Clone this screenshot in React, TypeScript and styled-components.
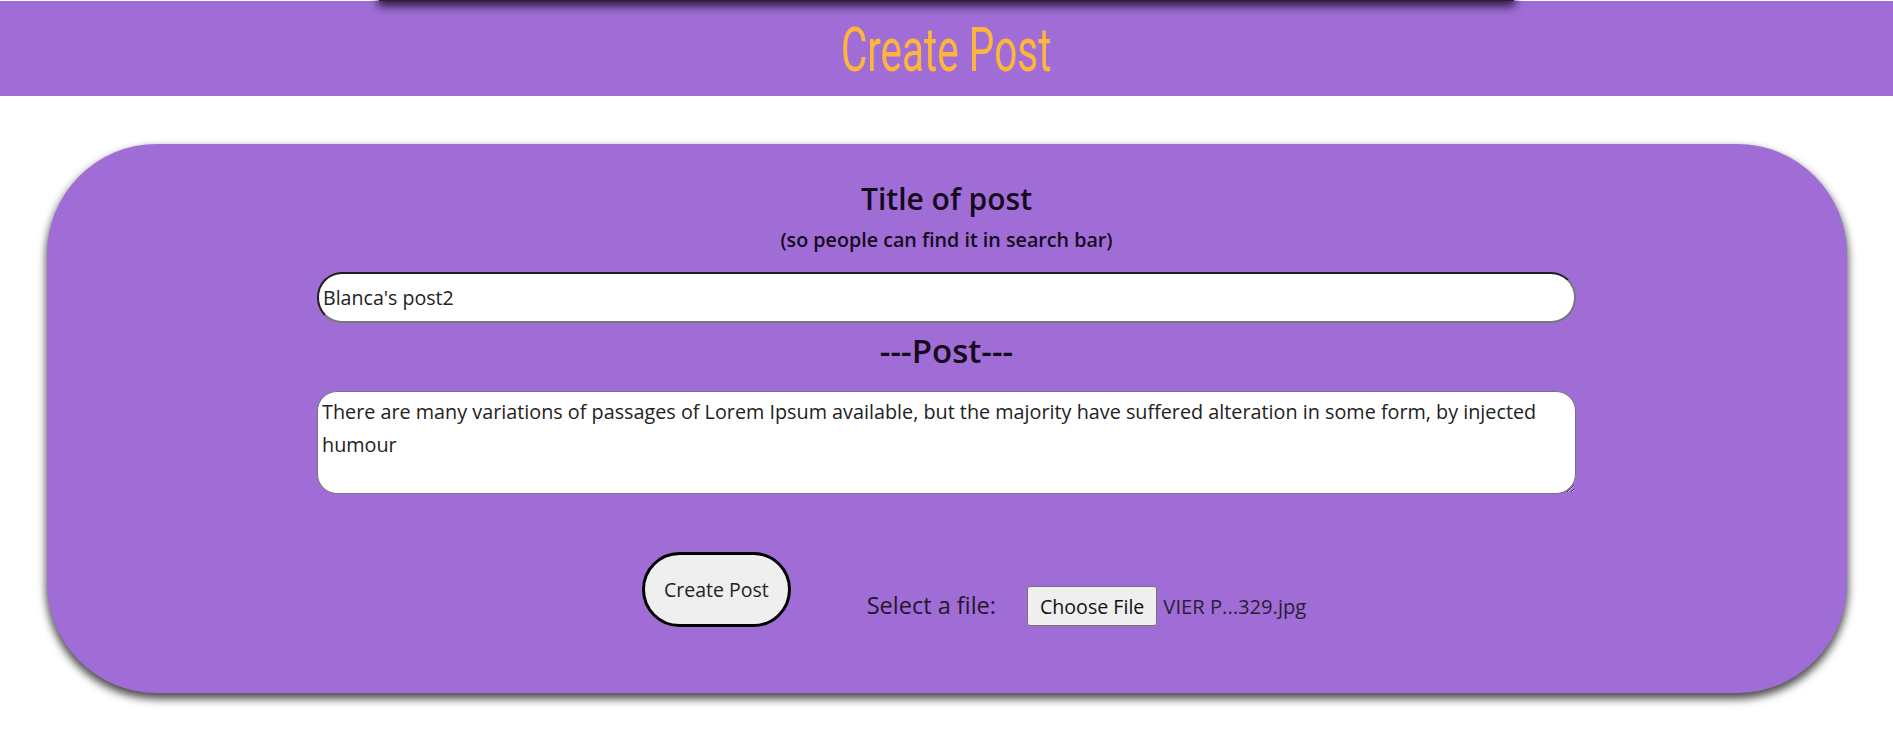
import React from "react";
import styled, { createGlobalStyle } from "styled-components";

const GlobalStyle = createGlobalStyle`
  html, body {
    margin: 0;
    padding: 0;
    background: #ffffff;
  }
  body {
    font-family: "Open Sans", "Noto Sans", Arial, sans-serif;
    color: #1a1a1a;
  }
  * { box-sizing: border-box; }
`;

const PURPLE = "#a06dd6";

const Page = styled.div`
  position: relative;
  display: flex;
  flex-direction: column;
  align-items: center;
  padding-top: 1px;
  padding-bottom: 40px;
`;

const NavShadow = styled.div`
  position: absolute;
  top: -40px;
  left: 20%;
  width: 60%;
  height: 41px;
  background: #2a1f30;
  box-shadow: 0 4px 9px 1px rgba(20, 5, 30, 0.85);
  z-index: 2;
`;

const Header = styled.header`
  width: 100%;
  height: 95px;
  background: ${PURPLE};
  display: flex;
  justify-content: center;
  align-items: flex-start;
  overflow: hidden;
`;

const HeaderTitle = styled.h1`
  margin: 0;
  display: inline-block;
  font-family: Roboto, "Open Sans", sans-serif;
  font-weight: 400;
  font-size: 62px;
  line-height: 97px;
  color: #fdb53c;
  transform: scaleX(0.653);
  white-space: nowrap;
`;

const Card = styled.main`
  width: 1800px;
  margin-top: 48px;
  background: ${PURPLE};
  border-radius: 110px;
  box-shadow: 0 5px 8px 1px rgba(0, 0, 0, 0.7);
  display: flex;
  flex-direction: column;
  align-items: center;
  padding: 35px 0 66px;
`;

const FieldColumn = styled.div`
  width: 1259px;
  display: flex;
  flex-direction: column;
  align-items: center;
`;

const Heading = styled.h2`
  margin: 0;
  font-size: 30px;
  line-height: 40px;
  font-weight: 600;
  color: #150a1c;
`;

const SubHeading = styled.p`
  margin: 9px 0 0;
  font-size: 19.7px;
  line-height: 24px;
  font-weight: 600;
  color: #150a1c;
`;

const TitleInput = styled.input`
  margin-top: 20px;
  width: 100%;
  height: 51px;
  padding: 0 4px;
  border-radius: 25px;
  border-style: solid;
  border-width: 2px;
  border-color: #1e1e1e #777777 #777777 #1e1e1e;
  background: #ffffff;
  font-family: inherit;
  font-size: 19.6px;
  color: #222;
  outline: none;
`;

const PostHeading = styled.h3`
  margin: 10px 0 0;
  font-size: 33px;
  line-height: 36px;
  font-weight: 600;
  color: #150a1c;
`;

const BodyInput = styled.textarea`
  margin-top: 22px;
  width: 100%;
  height: 103px;
  padding: 3px 4px;
  border: 1px solid #767676;
  border-radius: 20px;
  background: #ffffff;
  font-family: inherit;
  font-size: 19.8px;
  line-height: 33px;
  color: #222;
  resize: vertical;
  outline: none;
  overflow: hidden;
`;

const ActionRow = styled.div`
  margin-top: 58px;
  width: 100%;
  display: flex;
  align-items: flex-end;
  padding-left: 325px;
`;

const CreateButton = styled.button`
  height: 75px;
  padding: 0 19px;
  border: 3px solid #000;
  border-radius: 38px;
  background: #efefef;
  font-family: inherit;
  font-size: 19.5px;
  color: #222;
  cursor: pointer;
`;

const FileGroup = styled.label`
  display: flex;
  align-items: baseline;
  margin-left: 76px;
  margin-bottom: 1px;
`;

const FileLabel = styled.span`
  font-size: 23.5px;
  color: #24162e;
  margin-right: 31px;
`;

const ChooseButton = styled.span`
  display: inline-flex;
  align-items: center;
  height: 40px;
  padding: 0 12px;
  border: 1px solid #767676;
  border-radius: 3px;
  background: #efefef;
  font-size: 19.6px;
  color: #111;
`;

const FileName = styled.span`
  margin-left: 6px;
  font-size: 20.2px;
  color: #2a1d36;
`;

export default function App() {
  return (
    <>
      <GlobalStyle />
      <Page>
        <NavShadow />
        <Header>
          <HeaderTitle>Create Post</HeaderTitle>
        </Header>
        <Card>
          <FieldColumn>
            <Heading>Title of post</Heading>
            <SubHeading>(so people can find it in search bar)</SubHeading>
            <TitleInput type="text" defaultValue="Blanca's post2" />
            <PostHeading>---Post---</PostHeading>
            <BodyInput defaultValue="There are many variations of passages of Lorem Ipsum available, but the majority have suffered alteration in some form, by injected humour" />
            <ActionRow>
              <CreateButton type="button">Create Post</CreateButton>
              <FileGroup>
                <FileLabel>Select a file:</FileLabel>
                <ChooseButton>Choose File</ChooseButton>
                <FileName>VIER P...329.jpg</FileName>
              </FileGroup>
            </ActionRow>
          </FieldColumn>
        </Card>
      </Page>
    </>
  );
}
